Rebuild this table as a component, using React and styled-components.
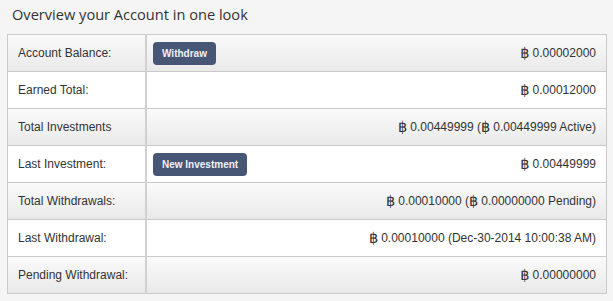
import React from 'react';
import styled, { createGlobalStyle } from 'styled-components';

const GlobalStyle = createGlobalStyle`
	html, body {
		margin: 0;
		padding: 0;
		background: #f5f5f5;
	}
`;

const Page = styled.div`
	padding: 4px 0 0 7px;
	width: 600px;
`;

const Title = styled.h3`
	margin: 0 0 9px 5px;
	font-family: 'Open Sans', sans-serif;
	font-weight: 400;
	font-size: 14.6px;
	line-height: 21px;
	color: #333;
`;

const Table = styled.table`
	width: 600px;
	table-layout: fixed;
	border-collapse: collapse;
	border: 1px solid #c9c9c9;
	box-shadow: 0 1px 0 #d6d6d6;
	font-family: 'Liberation Sans', Arial, sans-serif;
	font-size: 12px;
	color: #333;
`;

const Row = styled.tr`
	height: 37px;
	background: ${(p) =>
		p.$striped ? 'linear-gradient(to bottom, #fafafa, #e9e9e9)' : '#fff'};
`;

const Label = styled.td`
	width: 117px;
	padding: 0 10px;
	border: 1px solid #c9c9c9;
	border-right-width: 2px;
	border-right-color: #d0d0d0;
	white-space: nowrap;
`;

const Value = styled.td`
	padding: 0 10px 0 6px;
	border: 1px solid #c9c9c9;
`;

const ValueInner = styled.div`
	display: flex;
	align-items: center;
	justify-content: space-between;
`;

const Amount = styled.span`
	margin-left: auto;
	white-space: nowrap;
	line-height: 14px;
`;

const Baht = styled.span`
	display: inline-block;
	font-family: 'DejaVu Sans', sans-serif;
	font-size: 14.5px;
	line-height: 14px;
	vertical-align: top;
	margin-right: 3px;
`;

const ActionButton = styled.button`
	height: 23px;
	padding: 0 9px;
	border: none;
	border-radius: 4px;
	background: #475674;
	color: #eef1f6;
	font-family: 'Liberation Sans', Arial, sans-serif;
	font-size: 10px;
	font-weight: 700;
	cursor: pointer;
`;

const rows = [
	{ label: 'Account Balance:', button: 'Withdraw', value: ['0.00002000'] },
	{ label: 'Earned Total:', value: ['0.00012000'] },
	{ label: 'Total Investments', value: ['0.00449999 (', '0.00449999 Active)'] },
	{ label: 'Last Investment:', button: 'New Investment', value: ['0.00449999'] },
	{ label: 'Total Withdrawals:', value: ['0.00010000 (', '0.00000000 Pending)'] },
	{ label: 'Last Withdrawal:', value: ['0.00010000 (Dec-30-2014 10:00:38 AM)'] },
	{ label: 'Pending Withdrawal:', value: ['0.00000000'] },
];

export default function App() {
	return (
		<Page>
			<GlobalStyle />
			<Title>Overview your Account in one look</Title>
			<Table>
				<tbody>
					{rows.map((row, i) => (
						<Row key={row.label} $striped={i % 2 === 0}>
							<Label>{row.label}</Label>
							<Value>
								<ValueInner>
									{row.button && <ActionButton>{row.button}</ActionButton>}
									<Amount>
										{row.value.map((part, j) => (
											<React.Fragment key={j}>
												<Baht>฿</Baht>
												{part}
											</React.Fragment>
										))}
									</Amount>
								</ValueInner>
							</Value>
						</Row>
					))}
				</tbody>
			</Table>
		</Page>
	);
}
